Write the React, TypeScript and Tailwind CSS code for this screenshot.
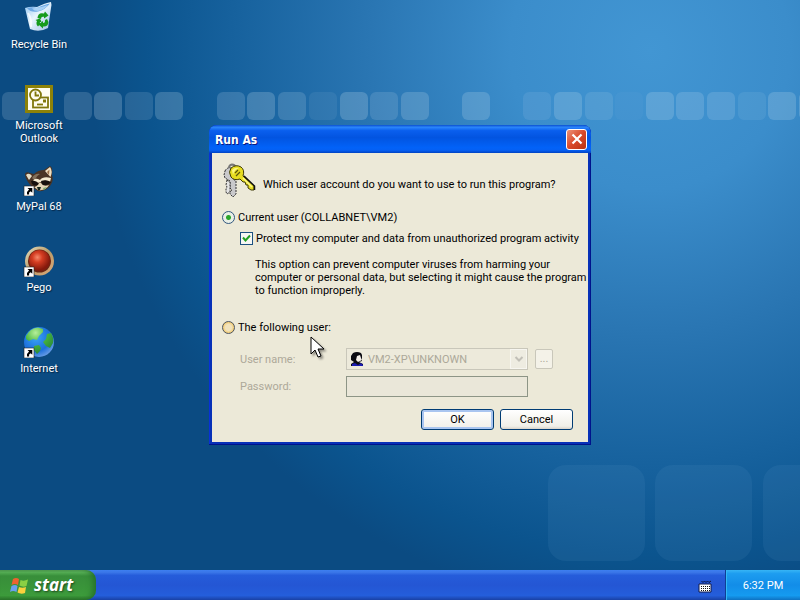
import React from 'react';

const ShortcutArrow = () => (
  <g>
    <rect x="1" y="22" width="10" height="10" fill="#fff" stroke="#222" strokeWidth="0.6" />
    <path d="M4.5 24h4.8v4.8l-1.6-1.6-1.6 1.4v2H4v-2.6l2.1-2.4z" fill="#000" />
  </g>
);

const RecycleBinIcon = () => (
  <svg className="size-8" viewBox="0 0 32 32" aria-hidden="true">
    <defs>
      <linearGradient id="bin" x1="0" y1="0" x2="1" y2="1">
        <stop offset="0" stopColor="#8fc4f2" />
        <stop offset="0.45" stopColor="#e9f5fd" />
        <stop offset="1" stopColor="#9dbfe6" />
      </linearGradient>
    </defs>
    <path d="M2 6 Q8 4 14 5 Q22 1 28 0 Q29 3 28 6 L25 26 Q16 31 7 27 Z" fill="url(#bin)" />
    <path d="M4 6 Q9 4.500 14 6 Q22 2 27 1.500 Q22 8 15 9.500 Q8 11 4 6Z" fill="#6fa9e4" />
    <path d="M9 6.500 Q18 6 25 3 Q21 8 15 9 Q11 9 9 6.500Z" fill="#a9d2f6" />
    <path d="M5 11 Q9 17 8 25" stroke="#fff" strokeWidth="2" fill="none" opacity="0.7" />
    <g fill="#169b1c">
      <path d="M14.500 16 Q15 10 21 11.500 L22 9.500 L25.500 13.500 L21 16.500 L21 14.800 Q18 14 18 17Z" />
      <path d="M24 17 L25.500 20 Q25 25 20 24.500 L20 26.500 L15.500 22.500 L20 19 L20 21 Q22.500 21 22 18Z" />
      <path d="M12.500 18 L17 16.500 L18.500 20 L16.800 20 L17.200 22 L15 24.500 Q12.500 22 14 19Z" />
    </g>
  </svg>
);

const OutlookIcon = () => (
  <svg className="size-8" viewBox="0 0 32 32" aria-hidden="true">
    <rect x="2" y="2" width="28" height="28" fill="#8d8208" />
    <rect x="5" y="5" width="22" height="22" fill="#fffdf0" />
    <g fill="none" stroke="#81780c" strokeWidth="1.8">
      <rect x="10" y="14.500" width="15" height="10" fill="#fffdf0" />
      <path d="M14 21.500h6" />
      <circle cx="12.500" cy="12" r="5.500" fill="#fffdf0" />
      <path d="M12.500 8.500v4H16" />
    </g>
    <rect x="20" y="16.500" width="3" height="3" fill="#81780c" />
  </svg>
);

const RaccoonIcon = () => (
  <svg className="size-8" viewBox="0 0 32 32" aria-hidden="true">
    <path d="M2 10 Q3 7 7 9 L11 10 Q15 6 21 6 L27 2 Q30 3 29 11 Q31 17 27 22 Q22 28 15 27 Q8 23 5 18 Q2 14 2 10Z" fill="#4a3425" />
    <path d="M3 11 Q6 8 9 12 L6 16Z" fill="#e5ddc6" />
    <path d="M22 7 L27 3 Q30 7 27.500 13Z" fill="#f0dfc1" />
    <path d="M24 8 L26.500 5.500 L26 11Z" fill="#9b7048" />
    <path d="M9 14 Q12 9 17 10 Q13 12 12 17Z" fill="#82705a" />
    <path d="M10 17 Q12 13 17 16 Q20 12 28 14 L27 18 Q22 15 19 18 L14 19Z" fill="#f4ead0" />
    <path d="M8 17 Q13 16 16 20 Q13 23 9 20Z M18 17 Q23 15 28 18 Q25 22 19 21Z" fill="#17110e" />
    <path d="M16 19 L18 19 Q20 23 26 21 Q23 27 15 26 L11 23 Q15 22 16 19Z" fill="#e5d7b8" />
    <path d="M14 23h4l-1 3h-2z" fill="#15251b" />
    <path d="M20 24l4-1-3 3z" fill="#7bae6d" />
    <ShortcutArrow />
  </svg>
);

const PegoIcon = () => (
  <svg className="size-8" viewBox="0 0 32 32" aria-hidden="true">
    <defs>
      <radialGradient id="pego" cx="0.4" cy="0.35" r="0.6">
        <stop offset="0" stopColor="#f58a6a" />
        <stop offset="0.4" stopColor="#d53d22" />
        <stop offset="1" stopColor="#84190c" />
      </radialGradient>
      <linearGradient id="ring" x1="0" y1="0" x2="1" y2="1">
        <stop offset="0" stopColor="#e6dfc0" />
        <stop offset="0.5" stopColor="#b89b68" />
        <stop offset="1" stopColor="#e0a878" />
      </linearGradient>
    </defs>
    <circle cx="16.500" cy="16" r="14.500" fill="url(#ring)" />
    <circle cx="16.500" cy="16" r="11.500" fill="#6b2412" />
    <circle cx="16.500" cy="15.500" r="10.500" fill="url(#pego)" />
    <ShortcutArrow />
  </svg>
);

const GlobeIcon = () => (
  <svg className="size-8" viewBox="0 0 32 32" aria-hidden="true">
    <defs>
      <radialGradient id="sea" cx="0.4" cy="0.35" r="0.7">
        <stop offset="0" stopColor="#3aa5f5" />
        <stop offset="0.65" stopColor="#1c70dc" />
        <stop offset="1" stopColor="#6ea0e6" />
      </radialGradient>
      <radialGradient id="land" cx="0.35" cy="0.2" r="0.8">
        <stop offset="0" stopColor="#b5ee9a" />
        <stop offset="0.5" stopColor="#49b83e" />
        <stop offset="1" stopColor="#2a8a3a" />
      </radialGradient>
    </defs>
    <circle cx="16" cy="16" r="15" fill="url(#sea)" />
    <path d="M3 10 Q7 2 15 1.500 L20 3 L20 6 L16 10 L14 14 L10 13 L6 15 L3 13Z M11 20 L16 19 L18 22 L17 25 L14 28 L11 24Z M24 8 L28 7 Q31 12 30 17 L27 22 L23 20 L20 16 L23 13Z" fill="url(#land)" />
    <ShortcutArrow />
  </svg>
);

const KeysIcon = () => (
  <svg className="size-9 shrink-0" viewBox="0 0 36 36" aria-hidden="true">
    <g stroke="#333" strokeWidth="1">
      <path d="M3 8 Q5 4 9 5 L12 8 L13 14 L11 16 L14 18 V31 L11 34 L8 31 V29 L10 27 L8 25 V18 L3 15 L2 12Z" fill="#c9c9cb" strokeDasharray="2 1" />
      <path d="M5 17l3 2v10l-3 2-1-2v-3l1-2-1-2z" fill="#e4e4e4" strokeDasharray="2 1" />
      <path d="M7 5 Q7 2 10 1.500 Q13 1.500 14 5" fill="none" stroke="#777" strokeWidth="2" />
      <path d="M9 5 Q14 1 19 4 Q23 7 21 13 L32 23 L32 27 L29 27 L26 25 L26 22 L24 22 L23 19 L21 19 L18 16 Q12 18 9 14 Q6 9 9 5Z" fill="#e6dc20" stroke="#3f3b06" />
    </g>
    <path d="M10 7 Q13 4 17 5 Q12 7 11 12Z" fill="#fcf780" />
    <path d="M21 15 L30 24" stroke="#fdf88a" strokeWidth="1.500" />
    <path d="M13 10l3-3M14 13l4-4" stroke="#5c550c" strokeWidth="1.200" />
    <path d="M22 13 L32.500 23v4" stroke="#111" strokeWidth="1.500" fill="none" />
  </svg>
);

const UserIcon = () => (
  <svg className="pointer-events-none absolute left-1 top-1 size-3.5" viewBox="0 0 14 14" aria-hidden="true">
    <path d="M3 1 Q7-1 11 1 L12 3 L12 9 L9 10 L13 12 V14 H1 V12 L4 10 L1 8 V4Z" fill="#0b0b12" />
    <path d="M7 4 L10 3 L11 6 L12 8 L8 10 L6 8Z" fill="#f5f0ea" />
    <path d="M2 12 L5 11 L8 13 L11 11 L13 13 V14 H2Z" fill="#1b1bb0" />
  </svg>
);

const squares: [number, number][] = [
  [2, 0.17], [64, 0.17], [94, 0.23], [125, 0.14], [155, 0.21],
  [217, 0.18], [247, 0.22], [278, 0.17], [309, 0.08], [340, 0.22], [370, 0.15], [401, 0.2],
  [462, 0.2], [523, 0.1], [554, 0.2], [585, 0.12], [615, 0.03], [646, 0.2],
  [676, 0.18], [707, 0.16], [738, 0.09], [768, 0.2], [799, 0.2],
];

const Wallpaper = () => (
  <svg className="absolute inset-0 size-full" viewBox="0 0 800 570" preserveAspectRatio="xMidYMid slice" aria-hidden="true">
    <defs>
      <radialGradient id="sky" gradientUnits="userSpaceOnUse" cx="0" cy="0" r="1" gradientTransform="translate(650 50) scale(560 560)">
        <stop offset="0" stopColor="#4296d3" />
        <stop offset="0.25" stopColor="#3b8dcb" />
        <stop offset="0.5" stopColor="#2a76b3" />
        <stop offset="0.75" stopColor="#16619d" />
        <stop offset="0.9" stopColor="#0b548e" />
        <stop offset="1" stopColor="#0b4b82" />
      </radialGradient>
    </defs>
    <rect width="800" height="570" fill="url(#sky)" />
    {squares.map(([x, opacity]) => (
      <rect key={x} x={x} y="92" width="28" height="28" rx="6" fill="#d4e6f2" opacity={opacity} />
    ))}
    {[548, 655, 763].map((x) => (
      <rect key={x} x={x} y="465" width="97" height="96" rx="18" fill="#6fa0cf" opacity="0.11" />
    ))}
  </svg>
);

const shortcuts = [
  { label: 'Recycle Bin', Icon: RecycleBinIcon },
  { label: 'Microsoft Outlook', Icon: OutlookIcon },
  { label: 'MyPal 68', Icon: RaccoonIcon },
  { label: 'Pego', Icon: PegoIcon },
  { label: 'Internet', Icon: GlobeIcon },
];

const RunAsDialog = () => (
  <section
    role="dialog"
    aria-labelledby="dialog-title"
    className="relative w-[382px] rounded-t-lg bg-[#0831b8] px-[3px] pb-[3px] shadow-[inset_-1px_-1px_0_#00138c,inset_1px_0_0_#0831d9]"
  >
    <header className="-mx-[3px] flex h-7 items-center justify-between rounded-t-lg bg-[linear-gradient(#0a4fd0_0%,#2b86fb_8%,#0a5fee_20%,#0254e0_45%,#0262f8_80%,#0560f4_90%,#0042c2_100%)] pl-1.5 pr-1">
      <h1 id="dialog-title" className="pt-0.5 font-['DejaVu_Sans_Condensed','DejaVu_Sans',sans-serif] text-[12px] leading-4 font-bold text-white [text-shadow:1px_1px_#0a1883]">
        Run As
      </h1>
      <button type="button" aria-label="Close" className="flex size-[21px] items-center justify-center rounded-[3px] border border-white bg-[linear-gradient(135deg,#ec9279,#d9492a_50%,#b83312)]">
        <svg className="size-4" viewBox="0 0 16 16" aria-hidden="true">
          <path d="M3.500 3.500l9 9M12.500 3.500l-9 9" stroke="#fff" strokeWidth="2.200" />
        </svg>
      </button>
    </header>
    <form className="bg-[#ece9d8] pt-2.5 pr-[15px] pb-3 pl-2.5" onSubmit={(e) => e.preventDefault()}>
      <div className="flex h-9 items-center gap-[5px]">
        <KeysIcon />
        <p className="whitespace-nowrap pt-1.5">Which user account do you want to use to run this program?</p>
      </div>
      <label className="mt-3 flex h-[13px] items-center gap-[3px]">
        <input
          type="radio"
          name="account"
          defaultChecked
          className="size-[13px] appearance-none rounded-full border border-[#31577f] bg-[radial-gradient(circle,#2aa62a_0_2px,#e9efe6_3px)]"
        />
        Current user (COLLABNET\VM2)
      </label>
      <label className="mt-2 flex h-[13px] items-center gap-[3px] whitespace-nowrap pl-[18px]">
        <span className="relative flex size-[13px]">
          <input type="checkbox" defaultChecked className="size-[13px] appearance-none border border-[#1c5180] bg-[#f7f7f4]" />
          <svg className="pointer-events-none absolute inset-0 size-[13px]" viewBox="0 0 13 13" aria-hidden="true">
            <path d="M3 5.500l2.500 3L10 3.500" fill="none" stroke="#21a121" strokeWidth="2" />
          </svg>
        </span>
        Protect my computer and data from unauthorized program activity
      </label>
      <p className="mt-[13px] pl-[33px] whitespace-nowrap">
        This option can prevent computer viruses from harming your
        <br />
        computer or personal data, but selecting it might cause the program
        <br />
        to function improperly.
      </p>
      <label className="mt-6 flex h-[13px] items-center gap-[3px]">
        <input
          type="radio"
          name="account"
          className="size-[13px] appearance-none rounded-full border border-[#4d5560] bg-[radial-gradient(circle,#f1e3bd_0_3px,#f4c761_6px)]"
        />
        The following user:
      </label>
      <div className="mt-3.5 grid grid-cols-[106px_182px_25px] items-center gap-y-1.5 pl-[18px] text-[#aca899]">
        <label htmlFor="user">User name:</label>
        <div className="relative h-[22px]">
          <select id="user" disabled className="h-[22px] w-full appearance-none border border-[#c9c7ba] bg-[#edeadb] pl-[21px] text-[#aca899] opacity-100">
            <option>VM2-XP\UNKNOWN</option>
          </select>
          <UserIcon />
          <span className="pointer-events-none absolute right-px top-px flex h-5 w-[17px] items-center justify-center border border-[#f7f6f0] bg-[#eeece1]">
            <svg className="h-1.5 w-2.5" viewBox="0 0 10 6" aria-hidden="true">
              <path d="M1.500 1L5 4.500L8.500 1" fill="none" stroke="#c1bfb7" strokeWidth="2" />
            </svg>
          </span>
        </div>
        <button type="button" disabled aria-label="Browse users" className="ml-[7px] h-5 w-[18px] rounded-[2px] border border-[#c9c7ba] bg-[#f4f2e8] leading-4">
          ...
        </button>
        <label htmlFor="password">Password:</label>
        <input id="password" type="password" disabled className="h-[21px] w-full border border-[#8d9586] bg-[#eae7d9] px-1" />
      </div>
      <div className="mt-3 flex justify-end gap-1.5">
        <button type="submit" className="h-[21px] w-[73px] rounded-[3px] border border-[#003c74] bg-[linear-gradient(#fff,#f0efe8)] shadow-[inset_0_0_0_2px_#a9c5f0]">
          OK
        </button>
        <button type="button" className="h-[21px] w-[73px] rounded-[3px] border border-[#003c74] bg-[linear-gradient(#fff,#f0efe8_85%,#d8d3ca)]">
          Cancel
        </button>
      </div>
    </form>
  </section>
);

const Taskbar = () => (
  <footer className="relative flex h-[30px] items-stretch bg-[linear-gradient(#3d7ff0_0%,#3a76e8_8%,#255cda_18%,#2456d4_50%,#245edb_85%,#1941a5_100%)]">
    <button
      type="button"
      className="flex w-24 items-center gap-[5px] rounded-r-[10px] bg-[linear-gradient(#5aa35a_0%,#57b057_8%,#388e3a_20%,#3a953a_60%,#3d9c3c_85%,#2a7229_100%)] pl-2.5 font-['Open_Sans',sans-serif] text-[17px] leading-5 font-bold text-white italic shadow-[inset_-5px_0_6px_-2px_#25702a] [text-shadow:1px_1px_2px_#1d4a1d]"
    >
      <svg className="size-[19px]" viewBox="0 0 19 19" aria-hidden="true">
        <path d="M3 3Q6 1 9 3L8 9Q5 7 1.500 9Z" fill="#ee6230" />
        <path d="M10.500 4Q14 5.500 18 3.500L16.500 10Q13 11.500 9.500 9.500Z" fill="#8bd044" />
        <path d="M1.500 10Q5 8 7.500 10L6.500 16Q3 14 0 16Z" fill="#6aa0f0" />
        <path d="M9 11Q12.500 12.500 16 11L15 17Q11 18.500 7.500 16.500Z" fill="#fbd13d" />
      </svg>
      start
    </button>
    <div className="ml-auto flex items-center pr-3">
      <svg className="size-4" viewBox="0 0 16 16" aria-hidden="true">
        <path d="M4.500 4l1.500 1.500L7.500 4 9 5.500 10.500 4 12 5.500 14 4" fill="none" stroke="#0b1440" />
        <path d="M2 7h12v8H2z" fill="#fff" stroke="#101b4b" />
        <path d="M4 9.500h9M4 11.500h9M4 13.500h9" stroke="#151515" strokeDasharray="1 1" />
      </svg>
    </div>
    <div className="flex w-[75px] items-center justify-center border-l border-[#0f3e94] bg-[linear-gradient(#37b5f5_0%,#1d9df0_12%,#128de8_50%,#159bf0_85%,#0e72c2_100%)] text-white shadow-[inset_1px_0_#33b9f7]">
      <time dateTime="18:32">6:32 PM</time>
    </div>
  </footer>
);

export default function App() {
  return (
    <div className="flex h-screen flex-col overflow-hidden bg-[#0b4b82] font-[Roboto,'Liberation_Sans',sans-serif] text-[11px] leading-[13px] text-black">
      <main className="relative flex flex-1 items-center justify-center">
        <Wallpaper />
        <nav aria-label="Desktop" className="absolute left-0 top-0 flex w-[78px] flex-col">
          {shortcuts.map(({ label, Icon }) => (
            <a key={label} href="#" className="flex h-[81px] flex-col items-center gap-1 px-1.5 pt-0.5 text-center text-white [text-shadow:1px_1px_1px_#062747]">
              <Icon />
              <span>{label}</span>
            </a>
          ))}
        </nav>
        <RunAsDialog />
        <svg className="pointer-events-none absolute left-[310px] top-[336px] h-[23px] w-4 drop-shadow-[2px_2px_1px_#0006]" viewBox="0 0 16 23" aria-hidden="true">
          <path d="M1 1v17l4-4 3 7 3-1-3-7h6z" fill="#fff" stroke="#000" />
        </svg>
      </main>
      <Taskbar />
    </div>
  );
}
